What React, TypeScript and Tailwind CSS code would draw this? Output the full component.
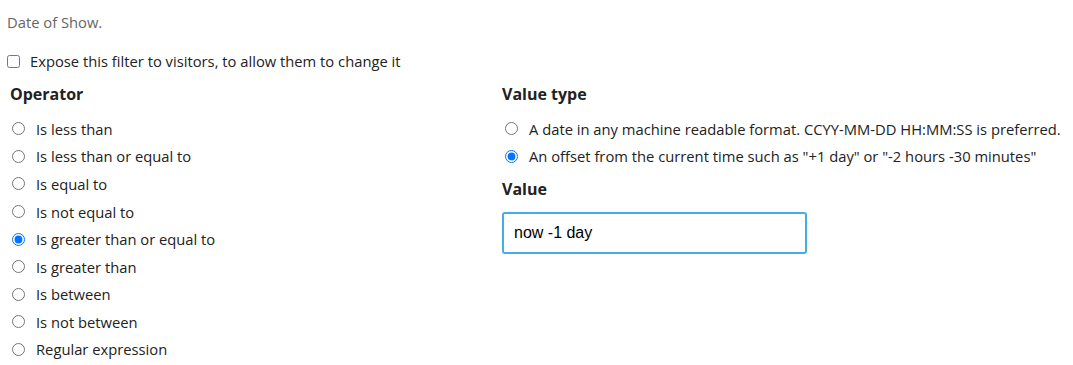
import React from "react";

const ops = [
  "Is less than",
  "Is less than or equal to",
  "Is equal to",
  "Is not equal to",
  "Is greater than or equal to",
  "Is greater than",
  "Is between",
  "Is not between",
  "Regular expression",
];

export default function App() {
  return (
    <div className="bg-white w-[1073px] h-[365px] overflow-hidden text-[14.75px] text-[#222]" style={{ fontFamily: '"Open Sans", sans-serif' }}>
      <div className="pt-[12px] pl-[7px] text-[#666] leading-[20px]">Date of Show.</div>
      <label className="flex items-center mt-[19px] ml-[2px] leading-[20px]">
        <input type="checkbox" className="m-0 ml-[5px] mr-[10px] w-[13px] h-[13px]" />
        <span>Expose this filter to visitors, to allow them to change it</span>
      </label>
      <div className="grid grid-cols-[492px_1fr] pl-[10px] mt-[13px]">
        <div>
          <div className="font-bold text-[16px] leading-[20px]">Operator</div>
          <div className="mt-[11px] flex flex-col">
            {ops.map((o, i) => (
              <label key={o} className="flex items-center h-[27.6px]">
                <input type="radio" name="op" defaultChecked={i === 4} className="m-0 ml-[2px] mr-[11px] w-[13px] h-[13px]" />
                <span>{o}</span>
              </label>
            ))}
          </div>
        </div>
        <div>
          <div className="font-bold text-[16px] leading-[20px]">Value type</div>
          <div className="mt-[11px] flex flex-col">
            <label className="flex items-center h-[27.6px]">
              <input type="radio" name="vt" className="m-0 ml-[3px] mr-[11px] w-[13px] h-[13px]" />
              <span>A date in any machine readable format. CCYY-MM-DD HH:MM:SS is preferred.</span>
            </label>
            <label className="flex items-center h-[27.6px]">
              <input type="radio" name="vt" defaultChecked className="m-0 ml-[3px] mr-[11px] w-[13px] h-[13px]" />
              <span>An offset from the current time such as "+1 day" or "-2 hours -30 minutes"</span>
            </label>
          </div>
          <div className="font-bold text-[16px] leading-[20px] mt-[9px]">Value</div>
          <div
            className="mt-[13px] w-[305px] h-[42px] border-2 border-[#45ade2] rounded-[3px] flex items-center px-[10px] text-[16px] text-black"
            style={{ fontFamily: '"Liberation Sans", Arial, sans-serif' }}
          >
            now -1 day
          </div>
        </div>
      </div>
    </div>
  );
}
